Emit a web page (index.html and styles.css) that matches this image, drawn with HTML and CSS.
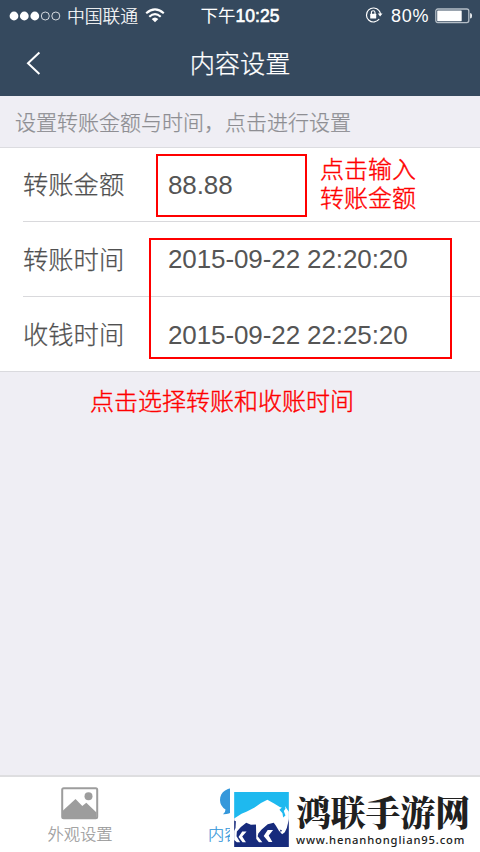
FILE: index.html
```html
<!DOCTYPE html>
<html lang="zh-CN">
<head>
<meta charset="utf-8">
<title>内容设置</title>
<link rel="stylesheet" href="styles.css">
</head>
<body>
<div class="screen">
  <header class="header">
    <div class="status">
      <div class="status-left">
        <svg class="signal" width="52" height="10" viewBox="0 0 52 10"><g fill="#fff"><circle cx="5" cy="5" r="4.4"/><circle cx="15.3" cy="5" r="4.4"/><circle cx="25.8" cy="5" r="4.4"/></g><g fill="none" stroke="#e4e8ec" stroke-width=".9"><circle cx="36.3" cy="5" r="4"/><circle cx="46.8" cy="5" r="4"/></g></svg>
        <span class="carrier">中国联通</span>
        <svg class="wifi" width="20" height="15" viewBox="0 0 20 15"><g fill="none" stroke="#fff" stroke-width="2.1"><path d="M1.2 5.3Q10-2.5 18.8 5.3"/><path d="M4.3 8.7Q10 3.5 15.7 8.7"/></g><path d="M6.7 11Q10 8 13.3 11L10 14.3Z" fill="#fff"/></svg>
      </div>
      <span class="clock">下午<b>10:25</b></span>
      <div class="status-right">
        <svg class="lock" width="18" height="16" viewBox="0 0 18 16"><path d="M14 3.7A7 7 0 1 0 14.2 12" fill="none" stroke="#fff" stroke-width="1.2"/><path d="M14 3.7Q15.3 5.3 15.4 7" fill="none" stroke="#fff" stroke-width="1.2"/><path d="M12.8 6.5H17.5L15.1 9.6Z" fill="#fff"/><rect x="5.2" y="6.8" width="6" height="4.8" rx=".5" fill="#fff"/><path d="M6.4 7V5.5a1.8 1.8 0 0 1 3.6 0V7" fill="none" stroke="#fff" stroke-width="1.1"/></svg>
        <span class="percent">80%</span>
        <svg class="battery" width="38" height="16" viewBox="0 0 38 16"><rect x=".8" y="1" width="33" height="13.6" rx="2" fill="none" stroke="#b5bec7" stroke-width="1.3"/><rect x="2.2" y="2.4" width="24.5" height="10.8" rx=".6" fill="#fff"/><path d="M35.2 5Q37 5.2 37 7.8T35.2 10.6Z" fill="#fff"/></svg>
      </div>
    </div>
    <nav class="nav">
      <svg class="back" width="15" height="24" viewBox="0 0 15 24"><path d="M13.4 1.5L2 12.2L13.4 22.9" fill="none" stroke="#fff" stroke-width="2"/></svg>
      <h1 class="title">内容设置</h1>
    </nav>
  </header>
  <p class="hint">设置转账金额与时间，点击进行设置</p>
  <main class="form">
    <div class="row"><span class="label">转账金额</span><span class="value">88.88</span></div>
    <div class="row"><span class="label">转账时间</span><span class="value">2015-09-22 22:20:20</span></div>
    <div class="row"><span class="label">收钱时间</span><span class="value">2015-09-22 22:25:20</span></div>
    <div class="mark mark-amount"></div>
    <div class="mark mark-times"></div>
    <p class="note note-amount">点击输入<br>转账金额</p>
    <p class="note note-times">点击选择转账和收账时间</p>
  </main>
  <footer class="tabs">
    <div class="tab">
      <svg class="tab-icon" width="38" height="33" viewBox="0 0 38 33"><rect x="1.2" y="1.2" width="35" height="30" rx="1.5" fill="#fff" stroke="#9d9d9d" stroke-width="2"/><circle cx="27.5" cy="9.3" r="4" fill="#9d9d9d"/><path d="M2 23.5L14.5 12L21.3 19L25.3 15.7L35.5 25.5V31H2Z" fill="#9d9d9d"/></svg>
      <span class="tab-label">外观设置</span>
    </div>
    <div class="tab active">
      <svg class="tab-icon" width="42" height="33" viewBox="0 0 42 33"><path d="M21 0C8 0 1 5 1 13Q1 19 6.500 22.500Q6.500 25.500 4 27.200Q10 27.500 14 24C30 27 41 21 41 13S32 0 21 0Z" fill="#3598db"/></svg>
      <span class="tab-label">内容</span>
    </div>
    <div class="brand">
      <svg class="brand-logo" width="55" height="55" viewBox="0 0 163 164"><path fill="#1eb9ef" d="M0 0H163V82H0Z"/><path fill="#172b7c" d="M0 80H163V164H0Z"/><path fill="#fff" d="M0 79L22 65L38 58L61 46L80 33L99 23L119 34L136 45L143 47L150 40L163 59V82L157 107L151 120L143 126L133 115L124 100L118 92L100 96L82 112L72 124L70 132L84 150H74L66 140L65 97L50 98L36 92L20 104L8 118L7 132L18 150H8L0 143V116L4 107L5 87L0 85Z"/><path fill="#1eb9ef" d="M135 53L142 46L146 40L142 31L151 39L153 50L148 57L153 70L146 76L144 63Z"/><path fill="#fff" d="M24 118H37L24 133L35 150H25L13 134ZM100 113H116L103 130L114 149H103L88 131Z"/><path fill="#172b7c" d="M136 112L143 115L139 119Z"/></svg>
      <div class="brand-copy">
        <strong class="brand-name">鸿联手游网</strong>
        <span class="brand-url">www.henanhonglian95.com</span>
      </div>
    </div>
  </footer>
</div>
</body>
</html>
```
FILE: styles.css
```css
* { box-sizing: border-box; }
body { margin: 0; font-family: "Liberation Sans", "Noto Sans CJK SC", sans-serif; }
p, h1 { margin: 0; font-weight: 300; }
svg { display: block; flex: none; }
.screen { width: 480px; height: 852px; display: flex; flex-direction: column; background: #efeef4; overflow: hidden; }
.header { height: 96px; flex: none; background: #35495e; color: #fff; }
.status { height: 32px; display: grid; grid-template-columns: 190px 100px 190px; align-items: center; }
.status-left, .status-right { display: flex; align-items: center; }
.status-left { padding-left: 9px; }
.carrier { margin-left: 6px; font: 300 17.8px/30px "Noto Sans CJK SC", sans-serif; width: 72px; padding-bottom: 2px; -webkit-text-stroke: .2px; white-space: nowrap; }
.wifi { margin-left: 5.5px; margin-bottom: 2px; }
.clock { text-align: center; font: 400 17.5px/32px "Liberation Sans", "Noto Sans CJK SC", sans-serif; white-space: nowrap; }
.clock b { font-weight: 400; -webkit-text-stroke: .6px #fff; }
.status-right { padding-left: 75px; }
.lock { margin-bottom: 2px; }
.percent { margin-left: 8px; font-size: 18px; line-height: 32px; width: 39px; letter-spacing: .7px; }
.battery { margin-left: 5px; margin-bottom: 1px; }
.nav { height: 64px; display: grid; grid-template-columns: 140px 200px 140px; align-items: center; }
.back { margin: 0 0 2px 26px; }
.title { font: 300 25.2px/60px "Noto Sans CJK SC", sans-serif; padding-bottom: 4px; text-align: center; -webkit-text-stroke: .25px; }
.hint { height: 52px; flex: none; padding-left: 15px; border-bottom: 1px solid #dcdce0; font: 300 21px/50px "Noto Sans CJK SC", sans-serif; color: #8e8e93; -webkit-text-stroke: .25px; white-space: nowrap; }
.form { position: relative; height: 224px; flex: none; background: #fff; border-bottom: 1px solid #dadade; padding-left: 23px; }
.row { height: 75px; display: grid; grid-template-columns: 145px 1fr; align-items: center; border-bottom: 1px solid #d9d9dc; color: #555; }
.row:nth-child(1) { height: 74px; }
.row:nth-child(3) { border-bottom: 0; }
.label { font: 300 25.3px/70px "Noto Sans CJK SC", sans-serif; padding-bottom: 3px; color: #505050; -webkit-text-stroke: .25px; }
.value { justify-self: start; font-size: 26px; line-height: 30px; letter-spacing: -.1px; white-space: nowrap; }
.mark { position: absolute; border: 2px solid #f00; }
.mark-amount { left: 156px; top: 6px; width: 151px; height: 63px; }
.mark-times { left: 149px; top: 90px; width: 303px; height: 121px; }
.note { position: absolute; color: #f00; font: 300 24px/29px "Noto Sans CJK SC", sans-serif; -webkit-text-stroke: .4px; white-space: nowrap; }
.note-amount { left: 320px; top: 5px; }
.note-times { left: 90px; top: 237px; }
.tabs { position: relative; margin-top: auto; height: 77px; flex: none; background: #fff; border-top: 2px solid #dedee0; display: grid; grid-template-columns: 160px 160px 160px; }
.tab { display: flex; flex-direction: column; align-items: center; padding-top: 10px; color: #999; }
.tab.active { color: #3598db; align-items: flex-start; padding-left: 48px; }
.tab.active .tab-icon { margin-left: 11px; }
.tab-label { margin-top: 1px; font: 300 16.3px/24px "Noto Sans CJK SC", sans-serif; -webkit-text-stroke: .2px; }
.brand { position: absolute; left: 230px; top: 10px; width: 250px; height: 65px; background: #fff; display: flex; padding: 5px 0 0 4px; }
.brand-copy { margin-left: 7px; display: flex; flex-direction: column; }
.brand-name { height: 41px; font: 900 34.8px/38px "Noto Serif CJK SC", "Noto Sans CJK SC", serif; color: #202020; white-space: nowrap; }
.brand-url { font: 500 11.2px/14px "Noto Sans", sans-serif; letter-spacing: .85px; color: #202020; white-space: nowrap; }
```
